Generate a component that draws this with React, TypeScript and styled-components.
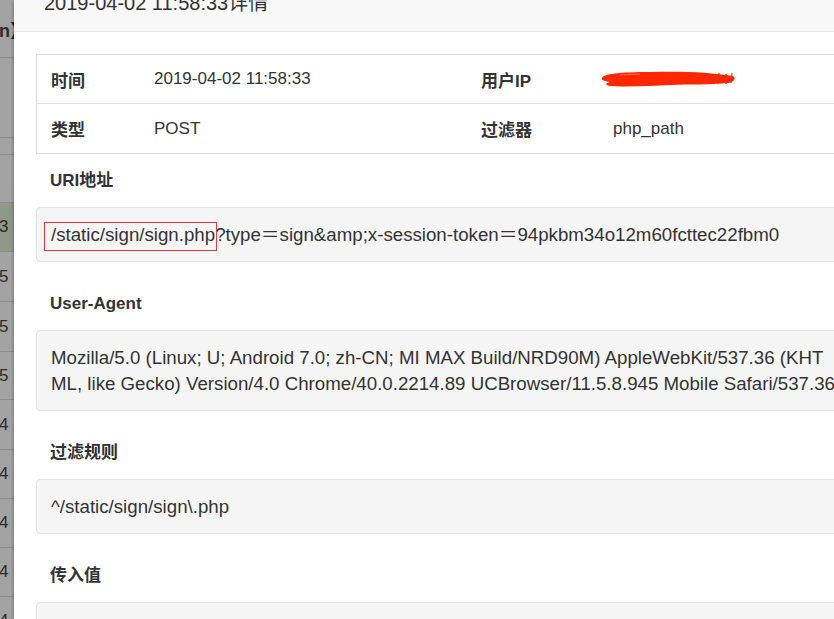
import React from "react";
import styled, { createGlobalStyle } from "styled-components";

const GlobalStyle = createGlobalStyle`
  html, body {
    margin: 0;
    padding: 0;
    background: #ffffff;
  }
  body {
    font-family: "Liberation Sans", "Noto Sans CJK SC", sans-serif;
    color: #333333;
  }
`;

const Screen = styled.div`
  display: flex;
  width: 834px;
  height: 619px;
  overflow: hidden;
`;

const Backdrop = styled.div`
  flex: 0 0 14px;
  display: flex;
  flex-direction: column;
  background: #a3a3a3;
  overflow: hidden;
`;

const StripRow = styled.div<{ $h: number; $tint?: boolean; $bold?: boolean }>`
  flex: 0 0 ${({ $h }) => $h}px;
  display: flex;
  align-items: center;
  box-sizing: border-box;
  border-bottom: 1px solid #8e8e8e;
  background: ${({ $tint }) => ($tint ? "#8f9987" : "transparent")};
  font-size: ${({ $bold }) => ($bold ? 18 : 17)}px;
  font-weight: ${({ $bold }) => ($bold ? 700 : 400)};
  color: #2b2b2b;
  white-space: nowrap;
  margin-left: -1px;
`;

const Dialog = styled.div`
  flex: 0 0 858px;
  display: flex;
  flex-direction: column;
  background: #ffffff;
  box-shadow: -1px 0 3px rgba(0, 0, 0, 0.25);
`;

const Header = styled.div`
  height: 32px;
  box-sizing: border-box;
  display: flex;
  align-items: flex-end;
  padding: 0 30px 17px;
  background: #f8f8f8;
  border-bottom: 1px solid #e8e8e8;
`;

const Title = styled.div`
  font-size: 20px;
  line-height: 22px;
  color: #333333;
  white-space: nowrap;
`;

const Body = styled.div`
  padding: 22px 22px;
  display: flex;
  flex-direction: column;
`;

const InfoTable = styled.div`
  border: 1px solid #dddddd;
`;

const InfoRow = styled.div`
  display: grid;
  grid-template-columns: 103px 327px 132px 1fr;
  min-height: 48px;
  & + & {
    border-top: 1px solid #dddddd;
    min-height: 49px;
  }
`;

const Cell = styled.div<{ $label?: boolean }>`
  position: relative;
  display: flex;
  align-items: center;
  padding: 0 14px;
  font-size: 17px;
  font-weight: ${({ $label }) => ($label ? 700 : 400)};
  color: #333333;
  white-space: nowrap;
`;

const Scribble = styled.svg`
  position: absolute;
  left: 1px;
  top: 50%;
  transform: translateY(-50%);
`;

const Sections = styled.div`
  display: flex;
  flex-direction: column;
  gap: 28px;
  padding-top: 13px;
`;

const Section = styled.section`
  display: flex;
  flex-direction: column;
  gap: 13px;
`;

const SectionTitle = styled.div`
  padding: 1px 14px 0;
  font-size: 17px;
  line-height: 26px;
  font-weight: 700;
  color: #333333;
`;

const Well = styled.div<{ $minH?: number }>`
  min-height: ${({ $minH }) => ($minH ? `${$minH}px` : "auto")};
  padding: 13.5px 14px;
  background: #f5f5f5;
  border: 1px solid #e2e2e2;
  border-radius: 4px;
  font-size: 18.7px;
  line-height: 26px;
  color: #333333;
  word-break: break-all;
`;

const Marked = styled.span`
  position: relative;
  &::before {
    content: "";
    position: absolute;
    left: -7px;
    right: -2px;
    top: -2px;
    bottom: -6px;
    border: 1px solid #e8383d;
  }
`;

const stripRows = [
  { h: 58, t: "n】", bold: true },
  { h: 80 },
  { h: 17 },
  { h: 48 },
  { h: 49, t: "3", tint: true },
  { h: 50, t: "5" },
  { h: 50, t: "5" },
  { h: 48, t: "5" },
  { h: 50, t: "4" },
  { h: 49, t: "4" },
  { h: 49, t: "4" },
  { h: 49, t: "4" },
  { h: 49, t: "4" },
];

const App: React.FC = () => {
  return (
    <Screen>
      <GlobalStyle />
      <Backdrop>
        {stripRows.map((r, i) => (
          <StripRow key={i} $h={r.h} $tint={r.tint} $bold={r.bold}>
            {r.t}
          </StripRow>
        ))}
      </Backdrop>
      <Dialog>
        <Header>
          <Title>2019-04-02 11:58:33详情</Title>
        </Header>
        <Body>
          <InfoTable>
            <InfoRow>
              <Cell $label>时间</Cell>
              <Cell>2019-04-02 11:58:33</Cell>
              <Cell $label>用户IP</Cell>
              <Cell>
                <Scribble width="136" height="22" viewBox="0 0 136 22">
                  <path d="M112 6 L111 15 M119 5 L118 16 M126 6 L126 16 M132 5 L131 15" stroke="#3bb54a" strokeWidth="1.6" />
                  <path
                    d="M2 10 C 3 6, 20 4, 50 4 C 80 3, 110 4, 133 8 C 136 10, 135 14, 128 15 C 110 17, 90 16, 70 17 C 50 18, 25 19, 10 18 C 4 17, 6 15, 10 14 C 6 13, 1 13, 2 10 Z"
                    fill="#ff2600"
                  />
                  <path d="M20 7 L40 6" stroke="#ff6a50" strokeWidth="1" />
                </Scribble>
              </Cell>
            </InfoRow>
            <InfoRow>
              <Cell $label>类型</Cell>
              <Cell>POST</Cell>
              <Cell $label>过滤器</Cell>
              <Cell>php_path</Cell>
            </InfoRow>
          </InfoTable>
          <Sections>
            <Section>
              <SectionTitle>URI地址</SectionTitle>
              <Well>
                <Marked>/static/sign/sign.php</Marked>?type＝sign&amp;amp;x-session-token＝94pkbm34o12m60fcttec22fbm0
              </Well>
            </Section>
            <Section>
              <SectionTitle>User-Agent</SectionTitle>
              <Well>
                Mozilla/5.0 (Linux; U; Android 7.0; zh-CN; MI MAX Build/NRD90M) AppleWebKit/537.36 (KHTML, like Gecko) Version/4.0 Chrome/40.0.2214.89 UCBrowser/11.5.8.945 Mobile Safari/537.36
              </Well>
            </Section>
            <Section>
              <SectionTitle>过滤规则</SectionTitle>
              <Well>^/static/sign/sign\.php</Well>
            </Section>
            <Section>
              <SectionTitle>传入值</SectionTitle>
              <Well $minH={26}></Well>
            </Section>
          </Sections>
        </Body>
      </Dialog>
    </Screen>
  );
};

export default App;
